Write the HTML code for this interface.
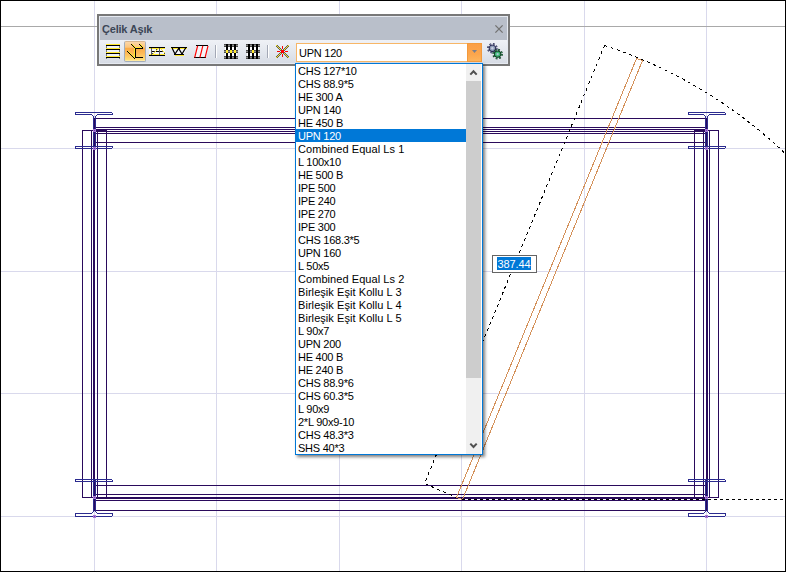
<!DOCTYPE html>
<html><head><meta charset="utf-8"><title>Çelik Aşık</title>
<style>
html,body{margin:0;padding:0;background:#fff;}
body{width:786px;height:572px;position:relative;overflow:hidden;font-family:"Liberation Sans",sans-serif;font-size:11px;color:#000;}
#cv{position:absolute;left:0;top:0;}
#frame{position:absolute;left:0;top:0;width:784px;height:570px;border:1px solid #000;pointer-events:none;}
#tb{position:absolute;left:97px;top:14px;width:409px;height:48px;border:2px solid #787878;background:#b9bfca;}
#tb::after{content:'';position:absolute;left:0;top:0;width:409px;height:48px;box-shadow:inset 0 0 0 1px #e6eaf1;pointer-events:none;}
#title{position:absolute;left:3px;top:7px;font-weight:bold;font-size:11px;letter-spacing:-0.2px;color:#3c4656;line-height:13px;}
#bar{position:absolute;left:0;top:24px;width:409px;height:24px;background:linear-gradient(#eff1f6,#e3e7ee 50%,#d6dbe4);}
#close{position:absolute;left:395px;top:7.5px;width:10px;height:10px;}
#sel{position:absolute;left:25px;top:1px;width:20px;height:19px;border:1px solid #a3adba;border-top-color:#d8b690;border-radius:2px;background:linear-gradient(#fcd6a8 0,#fcc57c 28%,#fbaa46 32%,#fdba58 60%,#ffdf78 94%,#fff1c0 100%);}
#combo{position:absolute;left:197px;top:3px;width:184px;height:17px;border:1px solid #f7b667;background:#fff;}
#combo span{position:absolute;left:2px;top:3px;line-height:13px;letter-spacing:-0.25px;}
#cbtn{position:absolute;right:-1px;top:-1px;width:13px;height:17px;border:1px solid #f39a3c;background:linear-gradient(#fb9f47,#fca64d 60%,#fdb45c);}
#cbtn svg{position:absolute;left:4px;top:6px;}
#pop{position:absolute;left:295px;top:63px;width:186px;height:390px;border:1px solid #0078d7;background:#fff;box-shadow:2px 2px 3px rgba(0,0,0,.5);}
.r{height:13px;line-height:15px;padding-left:2px;width:168px;white-space:nowrap;overflow:hidden;}
.r{letter-spacing:0.06px;}
.r.u{letter-spacing:-0.25px;}
.r.sel{background:#0078d7;color:#fff;}
#sb{position:absolute;left:170px;top:0;width:15px;height:390px;background:#f0f0f0;}
#thumb{position:absolute;left:0;top:17px;width:15px;height:297px;background:#cdcdcd;}
#inp{position:absolute;left:492px;top:255px;width:43px;height:16px;border:1px solid #646464;background:#fff;}
#inp span{position:absolute;left:4px;top:1px;height:13px;width:33.5px;line-height:15px;background:#0078d7;color:#fff;padding:0 0 0 0.5px;overflow:hidden;letter-spacing:-0.1px;}
</style></head><body>
<svg id="cv" width="786" height="572" viewBox="0 0 786 572" shape-rendering="crispEdges">
<rect x="94" y="0" width="1" height="572" fill="#d9d9ec"/>
<rect x="216" y="0" width="1" height="572" fill="#d9d9ec"/>
<rect x="339" y="0" width="1" height="572" fill="#d9d9ec"/>
<rect x="461" y="0" width="1" height="572" fill="#d9d9ec"/>
<rect x="584" y="0" width="1" height="572" fill="#d9d9ec"/>
<rect x="706" y="0" width="1" height="572" fill="#d9d9ec"/>
<rect x="0" y="148" width="786" height="1" fill="#d9d9ec"/>
<rect x="0" y="271" width="786" height="1" fill="#d9d9ec"/>
<rect x="0" y="393" width="786" height="1" fill="#d9d9ec"/>
<rect x="0" y="516" width="786" height="1" fill="#d9d9ec"/>
<rect x="0" y="26" width="786" height="1" fill="#a9a9a9"/>
<rect x="96" y="118" width="610" height="1" fill="#2a0a5c"/>
<rect x="96" y="127" width="610" height="1" fill="#2a0a5c"/>
<rect x="96" y="129" width="610" height="1" fill="#2a0a5c"/>
<rect x="96" y="131" width="610" height="1" fill="#2a0a5c"/>
<rect x="96" y="133" width="610" height="1" fill="#2a0a5c"/>
<rect x="96" y="142" width="610" height="1" fill="#2a0a5c"/>
<rect x="96" y="485" width="610" height="1" fill="#2a0a5c"/>
<rect x="96" y="494" width="610" height="1" fill="#2a0a5c"/>
<rect x="96" y="497" width="610" height="2" fill="#2a0a5c"/>
<rect x="96" y="500" width="610" height="1" fill="#2a0a5c"/>
<rect x="96" y="510" width="610" height="1" fill="#2a0a5c"/>
<rect x="82" y="130" width="1" height="368" fill="#2a0a5c"/>
<rect x="91" y="130" width="1" height="368" fill="#2a0a5c"/>
<rect x="97" y="130" width="1" height="368" fill="#2a0a5c"/>
<rect x="106" y="130" width="1" height="368" fill="#2a0a5c"/>
<rect x="694" y="130" width="1" height="368" fill="#2a0a5c"/>
<rect x="703" y="130" width="1" height="368" fill="#2a0a5c"/>
<rect x="709" y="130" width="1" height="368" fill="#2a0a5c"/>
<rect x="718" y="130" width="1" height="368" fill="#2a0a5c"/>
<rect x="93" y="118" width="2" height="393" fill="#2a0a5c"/>
<rect x="706" y="118" width="2" height="393" fill="#2a0a5c"/>
<rect x="82" y="130" width="25" height="1" fill="#2a0a5c"/>
<rect x="694" y="130" width="25" height="1" fill="#2a0a5c"/>
<rect x="82" y="497" width="25" height="1" fill="#2a0a5c"/>
<rect x="694" y="497" width="25" height="1" fill="#2a0a5c"/>
<rect x="96" y="129" width="11" height="3" fill="#2a0a5c"/>
<rect x="694" y="129" width="11" height="3" fill="#2a0a5c"/>
<rect x="76" y="112" width="36" height="1" fill="#2b2b8f"/>
<rect x="75" y="112" width="1" height="3" fill="#2b2b8f"/>
<rect x="112" y="113" width="1" height="2" fill="#2b2b8f"/>
<rect x="76" y="114" width="16" height="1" fill="#2b2b8f"/>
<rect x="97" y="114" width="15" height="1" fill="#2b2b8f"/>
<rect x="92" y="115" width="1" height="1" fill="#2b2b8f"/>
<rect x="96" y="115" width="1" height="1" fill="#2b2b8f"/>
<rect x="76" y="148" width="36" height="1" fill="#2b2b8f"/>
<rect x="75" y="146" width="1" height="3" fill="#2b2b8f"/>
<rect x="112" y="146" width="1" height="2" fill="#2b2b8f"/>
<rect x="76" y="146" width="36" height="1" fill="#2b2b8f"/>
<rect x="93" y="116" width="1" height="33" fill="#2b2b8f"/>
<rect x="95" y="116" width="1" height="33" fill="#2b2b8f"/>
<rect x="689" y="112" width="36" height="1" fill="#2b2b8f"/>
<rect x="688" y="112" width="1" height="3" fill="#2b2b8f"/>
<rect x="725" y="113" width="1" height="2" fill="#2b2b8f"/>
<rect x="689" y="114" width="15" height="1" fill="#2b2b8f"/>
<rect x="709" y="114" width="16" height="1" fill="#2b2b8f"/>
<rect x="704" y="115" width="1" height="1" fill="#2b2b8f"/>
<rect x="708" y="115" width="1" height="1" fill="#2b2b8f"/>
<rect x="689" y="148" width="36" height="1" fill="#2b2b8f"/>
<rect x="688" y="146" width="1" height="3" fill="#2b2b8f"/>
<rect x="725" y="146" width="1" height="2" fill="#2b2b8f"/>
<rect x="689" y="146" width="36" height="1" fill="#2b2b8f"/>
<rect x="705" y="116" width="1" height="33" fill="#2b2b8f"/>
<rect x="707" y="116" width="1" height="33" fill="#2b2b8f"/>
<rect x="76" y="479" width="36" height="1" fill="#2b2b8f"/>
<rect x="75" y="479" width="1" height="3" fill="#2b2b8f"/>
<rect x="112" y="480" width="1" height="2" fill="#2b2b8f"/>
<rect x="76" y="481" width="36" height="1" fill="#2b2b8f"/>
<rect x="76" y="516" width="36" height="1" fill="#2b2b8f"/>
<rect x="75" y="513" width="1" height="4" fill="#2b2b8f"/>
<rect x="112" y="513" width="1" height="3" fill="#2b2b8f"/>
<rect x="76" y="513" width="16" height="1" fill="#2b2b8f"/>
<rect x="97" y="513" width="15" height="1" fill="#2b2b8f"/>
<rect x="92" y="512" width="1" height="1" fill="#2b2b8f"/>
<rect x="96" y="512" width="1" height="1" fill="#2b2b8f"/>
<rect x="93" y="479" width="1" height="33" fill="#2b2b8f"/>
<rect x="95" y="479" width="1" height="33" fill="#2b2b8f"/>
<rect x="689" y="479" width="36" height="1" fill="#2b2b8f"/>
<rect x="688" y="479" width="1" height="3" fill="#2b2b8f"/>
<rect x="725" y="480" width="1" height="2" fill="#2b2b8f"/>
<rect x="689" y="481" width="36" height="1" fill="#2b2b8f"/>
<rect x="689" y="516" width="36" height="1" fill="#2b2b8f"/>
<rect x="688" y="513" width="1" height="4" fill="#2b2b8f"/>
<rect x="725" y="513" width="1" height="3" fill="#2b2b8f"/>
<rect x="689" y="513" width="15" height="1" fill="#2b2b8f"/>
<rect x="709" y="513" width="16" height="1" fill="#2b2b8f"/>
<rect x="704" y="512" width="1" height="1" fill="#2b2b8f"/>
<rect x="708" y="512" width="1" height="1" fill="#2b2b8f"/>
<rect x="705" y="479" width="1" height="33" fill="#2b2b8f"/>
<rect x="707" y="479" width="1" height="33" fill="#2b2b8f"/>
<rect x="93" y="129" width="3" height="3" fill="#a877d6"/>
<rect x="94" y="130" width="1" height="1" fill="#6a3fae"/>
<rect x="93" y="147" width="3" height="3" fill="#a877d6"/>
<rect x="94" y="148" width="1" height="1" fill="#6a3fae"/>
<rect x="93" y="496" width="3" height="3" fill="#a877d6"/>
<rect x="94" y="497" width="1" height="1" fill="#6a3fae"/>
<rect x="93" y="515" width="3" height="3" fill="#a877d6"/>
<rect x="94" y="516" width="1" height="1" fill="#6a3fae"/>
<rect x="705" y="129" width="3" height="3" fill="#a877d6"/>
<rect x="706" y="130" width="1" height="1" fill="#6a3fae"/>
<rect x="705" y="147" width="3" height="3" fill="#a877d6"/>
<rect x="706" y="148" width="1" height="1" fill="#6a3fae"/>
<rect x="705" y="496" width="3" height="3" fill="#a877d6"/>
<rect x="706" y="497" width="1" height="1" fill="#6a3fae"/>
<rect x="705" y="515" width="3" height="3" fill="#a877d6"/>
<rect x="706" y="516" width="1" height="1" fill="#6a3fae"/>
<g stroke="#d4915a" stroke-width="1" fill="none"><path d="M456.5 497.5 L636.5 58.5 L642.5 60.5 L462.5 499.5 Z"/></g>
<g stroke="#000" stroke-width="1" fill="none" stroke-dasharray="3 3.5"><path d="M604.5 45.5 L424.5 483.5 L456.5 497.5"/><path d="M462 499.5 H786" stroke-dasharray="3 3"/><path d="M604.5 45.5 A476.2 476.2 0 0 1 786 154.2"/></g>
</svg>
<div id="tb">
 <div id="title">Çelik Aşık</div>
 <svg id="close" viewBox="0 0 10 10"><path d="M1.4 1.4L8.6 8.6M8.6 1.4L1.4 8.6" stroke="#727272" stroke-width="1.3" fill="none"/></svg>
 <div id="bar">
  <div id="sel"></div>
  <svg id="icons" width="409" height="24" viewBox="0 0 409 24" style="position:absolute;left:0;top:0" shape-rendering="crispEdges">
<g transform="translate(-99,-40)"><rect x="106" y="45" width="14" height="12" fill="#eef1f9"/><rect x="106" y="44" width="1" height="15" fill="#7a7a7a"/><rect x="119" y="44" width="1" height="15" fill="#7a7a7a"/><rect x="106" y="44" width="14" height="1" fill="#ffe92e"/><rect x="106" y="45" width="14" height="1" fill="#000"/><rect x="106" y="48" width="14" height="1" fill="#ffe92e"/><rect x="106" y="49" width="14" height="1" fill="#000"/><rect x="106" y="52" width="14" height="1" fill="#ffe92e"/><rect x="106" y="53" width="14" height="1" fill="#000"/><rect x="106" y="56" width="14" height="1" fill="#ffe92e"/><rect x="106" y="57" width="14" height="1" fill="#000"/><rect x="131" y="44" width="1" height="1" fill="#000"/><rect x="132" y="44" width="1" height="1" fill="#ffe92e"/><rect x="132" y="45" width="1" height="1" fill="#000"/><rect x="133" y="45" width="1" height="1" fill="#ffe92e"/><rect x="133" y="46" width="1" height="1" fill="#000"/><rect x="134" y="46" width="1" height="1" fill="#ffe92e"/><rect x="134" y="47" width="1" height="1" fill="#000"/><rect x="135" y="47" width="1" height="1" fill="#ffe92e"/><rect x="127" y="51" width="1" height="1" fill="#000"/><rect x="128" y="51" width="1" height="1" fill="#ffe92e"/><rect x="128" y="52" width="1" height="1" fill="#000"/><rect x="129" y="52" width="1" height="1" fill="#ffe92e"/><rect x="129" y="53" width="1" height="1" fill="#000"/><rect x="130" y="53" width="1" height="1" fill="#ffe92e"/><rect x="130" y="54" width="1" height="1" fill="#000"/><rect x="131" y="54" width="1" height="1" fill="#ffe92e"/><rect x="131" y="55" width="1" height="1" fill="#000"/><rect x="132" y="55" width="1" height="1" fill="#ffe92e"/><rect x="132" y="56" width="1" height="1" fill="#000"/><rect x="133" y="56" width="1" height="1" fill="#ffe92e"/><rect x="133" y="57" width="1" height="1" fill="#000"/><rect x="134" y="57" width="1" height="1" fill="#ffe92e"/><rect x="134" y="58" width="1" height="1" fill="#000"/><rect x="134" y="48" width="1" height="9" fill="#ffe92e"/><rect x="135" y="48" width="1" height="10" fill="#000"/><rect x="136" y="47" width="6" height="1" fill="#ffe92e"/><rect x="135" y="48" width="8" height="1" fill="#000"/><rect x="139" y="44" width="1" height="1" fill="#000"/><rect x="140" y="44" width="1" height="1" fill="#ffe92e"/><rect x="140" y="45" width="1" height="1" fill="#000"/><rect x="141" y="45" width="1" height="1" fill="#ffe92e"/><rect x="141" y="46" width="1" height="1" fill="#000"/><rect x="142" y="46" width="1" height="1" fill="#ffe92e"/><rect x="142" y="47" width="1" height="1" fill="#000"/><rect x="135" y="57" width="8" height="1" fill="#000"/><rect x="149" y="49" width="16" height="5" fill="#f2f4fb"/><rect x="149" y="47" width="16" height="1" fill="#000"/><rect x="149" y="48" width="16" height="1" fill="#ffe92e"/><rect x="149" y="54" width="16" height="1" fill="#ffe92e"/><rect x="149" y="55" width="16" height="1" fill="#000"/><rect x="152" y="51" width="12" height="1" fill="#000"/><rect x="151" y="48" width="1" height="7" fill="#5c5c5c"/><rect x="159" y="48" width="1" height="7" fill="#5c5c5c"/><rect x="153" y="53" width="1" height="1" fill="#ffe92e"/><rect x="152" y="53" width="1" height="1" fill="#444"/><rect x="154" y="52" width="1" height="1" fill="#ffe92e"/><rect x="155" y="51" width="1" height="1" fill="#ffe92e"/><rect x="154" y="51" width="1" height="1" fill="#444"/><rect x="156" y="50" width="1" height="1" fill="#ffe92e"/><rect x="157" y="49" width="1" height="1" fill="#ffe92e"/><rect x="156" y="49" width="1" height="1" fill="#444"/><rect x="158" y="48" width="1" height="1" fill="#ffe92e"/><rect x="152" y="54" width="3" height="1" fill="#ffe92e"/><rect x="161" y="49" width="1" height="1" fill="#ffe92e"/><rect x="162" y="50" width="1" height="1" fill="#ffe92e"/><rect x="162" y="51" width="1" height="1" fill="#444"/><rect x="163" y="51" width="1" height="1" fill="#ffe92e"/><rect x="164" y="52" width="1" height="1" fill="#ffe92e"/><rect x="164" y="53" width="1" height="1" fill="#444"/><rect x="160" y="48" width="3" height="1" fill="#ffe92e"/><path d="M171 48H186.5L184 54.5H174Z" fill="#f4f6fb"/><rect x="171" y="47" width="16" height="1" fill="#000"/><rect x="171" y="48" width="16" height="1" fill="#ffe92e"/><rect x="172" y="48" width="1" height="1" fill="#000"/><rect x="178" y="48" width="2" height="1" fill="#000"/><rect x="185" y="48" width="1" height="1" fill="#000"/><rect x="174" y="54" width="10" height="1" fill="#000"/><rect x="175" y="55" width="9" height="1" fill="#ffe92e"/><path d="M172.3 48.5L175 54L178.7 48.5L182 54L185.3 48.5" stroke="#000" stroke-width="1.25" fill="none" shape-rendering="auto"/><path d="M197 46H208L205 57H194Z" fill="#f4f4f8"/><rect x="196" y="45" width="12" height="1" fill="#000"/><rect x="194" y="57" width="12" height="1" fill="#000"/><path d="M194.7 57.5L197.6 45.8" stroke="#ff0000" stroke-width="1.15" shape-rendering="auto"/><path d="M199.9 57.5L202.8 45.8" stroke="#ff0000" stroke-width="1.15" shape-rendering="auto"/><path d="M205.1 57.5L208.0 45.8" stroke="#ff0000" stroke-width="1.15" shape-rendering="auto"/><rect x="215" y="45" width="1" height="13" fill="#a3a8b5"/><rect x="216" y="45" width="1" height="13" fill="#fff"/><rect x="267" y="45" width="1" height="13" fill="#a3a8b5"/><rect x="268" y="45" width="1" height="13" fill="#fff"/><rect x="225" y="47" width="12" height="9" fill="#fff"/><rect x="224" y="44" width="14" height="3" fill="#4a4a4a"/><rect x="224" y="45" width="1" height="1" fill="#9a9a9a"/><rect x="229" y="45" width="1" height="1" fill="#9a9a9a"/><rect x="233" y="45" width="1" height="1" fill="#9a9a9a"/><rect x="237" y="45" width="1" height="1" fill="#9a9a9a"/><rect x="224" y="50" width="14" height="3" fill="#4a4a4a"/><rect x="224" y="51" width="1" height="1" fill="#9a9a9a"/><rect x="229" y="51" width="1" height="1" fill="#9a9a9a"/><rect x="233" y="51" width="1" height="1" fill="#9a9a9a"/><rect x="237" y="51" width="1" height="1" fill="#9a9a9a"/><rect x="224" y="56" width="14" height="3" fill="#4a4a4a"/><rect x="224" y="57" width="1" height="1" fill="#9a9a9a"/><rect x="229" y="57" width="1" height="1" fill="#9a9a9a"/><rect x="233" y="57" width="1" height="1" fill="#9a9a9a"/><rect x="237" y="57" width="1" height="1" fill="#9a9a9a"/><rect x="226" y="44" width="2" height="15" fill="#000"/><rect x="226" y="50" width="2" height="3" fill="#ffe92e"/><rect x="230" y="44" width="2" height="15" fill="#000"/><rect x="230" y="50" width="2" height="3" fill="#ffe92e"/><rect x="234" y="44" width="2" height="15" fill="#000"/><rect x="234" y="50" width="2" height="3" fill="#ffe92e"/><rect x="224" y="45" width="2" height="1" fill="#8c8c8c"/><rect x="228" y="45" width="2" height="1" fill="#8c8c8c"/><rect x="232" y="45" width="2" height="1" fill="#8c8c8c"/><rect x="236" y="45" width="2" height="1" fill="#8c8c8c"/><rect x="224" y="51" width="2" height="1" fill="#8c8c8c"/><rect x="228" y="51" width="2" height="1" fill="#8c8c8c"/><rect x="232" y="51" width="2" height="1" fill="#8c8c8c"/><rect x="236" y="51" width="2" height="1" fill="#8c8c8c"/><rect x="224" y="57" width="2" height="1" fill="#8c8c8c"/><rect x="228" y="57" width="2" height="1" fill="#8c8c8c"/><rect x="232" y="57" width="2" height="1" fill="#8c8c8c"/><rect x="236" y="57" width="2" height="1" fill="#8c8c8c"/><rect x="247" y="47" width="12" height="9" fill="#fff"/><rect x="246" y="44" width="14" height="3" fill="#4a4a4a"/><rect x="246" y="45" width="1" height="1" fill="#9a9a9a"/><rect x="251" y="45" width="1" height="1" fill="#9a9a9a"/><rect x="255" y="45" width="1" height="1" fill="#9a9a9a"/><rect x="259" y="45" width="1" height="1" fill="#9a9a9a"/><rect x="246" y="50" width="14" height="3" fill="#4a4a4a"/><rect x="246" y="51" width="1" height="1" fill="#9a9a9a"/><rect x="251" y="51" width="1" height="1" fill="#9a9a9a"/><rect x="255" y="51" width="1" height="1" fill="#9a9a9a"/><rect x="259" y="51" width="1" height="1" fill="#9a9a9a"/><rect x="246" y="56" width="14" height="3" fill="#4a4a4a"/><rect x="246" y="57" width="1" height="1" fill="#9a9a9a"/><rect x="251" y="57" width="1" height="1" fill="#9a9a9a"/><rect x="255" y="57" width="1" height="1" fill="#9a9a9a"/><rect x="259" y="57" width="1" height="1" fill="#9a9a9a"/><rect x="248" y="44" width="2" height="15" fill="#000"/><rect x="252" y="44" width="2" height="15" fill="#000"/><rect x="252" y="50" width="2" height="3" fill="#ffe92e"/><rect x="256" y="44" width="2" height="15" fill="#000"/><rect x="246" y="45" width="2" height="1" fill="#8c8c8c"/><rect x="250" y="45" width="2" height="1" fill="#8c8c8c"/><rect x="254" y="45" width="2" height="1" fill="#8c8c8c"/><rect x="258" y="45" width="2" height="1" fill="#8c8c8c"/><rect x="246" y="51" width="2" height="1" fill="#8c8c8c"/><rect x="250" y="51" width="2" height="1" fill="#8c8c8c"/><rect x="254" y="51" width="2" height="1" fill="#8c8c8c"/><rect x="258" y="51" width="2" height="1" fill="#8c8c8c"/><rect x="246" y="57" width="2" height="1" fill="#8c8c8c"/><rect x="250" y="57" width="2" height="1" fill="#8c8c8c"/><rect x="254" y="57" width="2" height="1" fill="#8c8c8c"/><rect x="258" y="57" width="2" height="1" fill="#8c8c8c"/><rect x="277" y="45" width="1" height="1" fill="#5a5a5a"/><rect x="276" y="46" width="1" height="1" fill="#5a5a5a"/><rect x="277" y="57" width="1" height="1" fill="#5a5a5a"/><rect x="276" y="56" width="1" height="1" fill="#5a5a5a"/><rect x="278" y="46" width="1" height="1" fill="#5a5a5a"/><rect x="277" y="47" width="1" height="1" fill="#5a5a5a"/><rect x="278" y="56" width="1" height="1" fill="#5a5a5a"/><rect x="277" y="55" width="1" height="1" fill="#5a5a5a"/><rect x="279" y="47" width="1" height="1" fill="#5a5a5a"/><rect x="278" y="48" width="1" height="1" fill="#5a5a5a"/><rect x="279" y="55" width="1" height="1" fill="#5a5a5a"/><rect x="278" y="54" width="1" height="1" fill="#5a5a5a"/><rect x="280" y="48" width="1" height="1" fill="#5a5a5a"/><rect x="279" y="49" width="1" height="1" fill="#5a5a5a"/><rect x="280" y="54" width="1" height="1" fill="#5a5a5a"/><rect x="279" y="53" width="1" height="1" fill="#5a5a5a"/><rect x="281" y="49" width="1" height="1" fill="#5a5a5a"/><rect x="280" y="50" width="1" height="1" fill="#5a5a5a"/><rect x="281" y="53" width="1" height="1" fill="#5a5a5a"/><rect x="280" y="52" width="1" height="1" fill="#5a5a5a"/><rect x="282" y="50" width="1" height="1" fill="#5a5a5a"/><rect x="281" y="51" width="1" height="1" fill="#5a5a5a"/><rect x="282" y="52" width="1" height="1" fill="#5a5a5a"/><rect x="281" y="51" width="1" height="1" fill="#5a5a5a"/><rect x="283" y="51" width="1" height="1" fill="#5a5a5a"/><rect x="282" y="52" width="1" height="1" fill="#5a5a5a"/><rect x="283" y="51" width="1" height="1" fill="#5a5a5a"/><rect x="282" y="50" width="1" height="1" fill="#5a5a5a"/><rect x="284" y="52" width="1" height="1" fill="#5a5a5a"/><rect x="283" y="53" width="1" height="1" fill="#5a5a5a"/><rect x="284" y="50" width="1" height="1" fill="#5a5a5a"/><rect x="283" y="49" width="1" height="1" fill="#5a5a5a"/><rect x="285" y="53" width="1" height="1" fill="#5a5a5a"/><rect x="284" y="54" width="1" height="1" fill="#5a5a5a"/><rect x="285" y="49" width="1" height="1" fill="#5a5a5a"/><rect x="284" y="48" width="1" height="1" fill="#5a5a5a"/><rect x="286" y="54" width="1" height="1" fill="#5a5a5a"/><rect x="285" y="55" width="1" height="1" fill="#5a5a5a"/><rect x="286" y="48" width="1" height="1" fill="#5a5a5a"/><rect x="285" y="47" width="1" height="1" fill="#5a5a5a"/><rect x="287" y="55" width="1" height="1" fill="#5a5a5a"/><rect x="286" y="56" width="1" height="1" fill="#5a5a5a"/><rect x="287" y="47" width="1" height="1" fill="#5a5a5a"/><rect x="286" y="46" width="1" height="1" fill="#5a5a5a"/><rect x="288" y="56" width="1" height="1" fill="#5a5a5a"/><rect x="287" y="57" width="1" height="1" fill="#5a5a5a"/><rect x="288" y="46" width="1" height="1" fill="#5a5a5a"/><rect x="287" y="45" width="1" height="1" fill="#5a5a5a"/><rect x="276" y="45" width="1" height="1" fill="#ffe92e"/><rect x="276" y="57" width="1" height="1" fill="#ffe92e"/><rect x="277" y="46" width="1" height="1" fill="#ffe92e"/><rect x="277" y="56" width="1" height="1" fill="#ffe92e"/><rect x="278" y="47" width="1" height="1" fill="#ffe92e"/><rect x="278" y="55" width="1" height="1" fill="#ffe92e"/><rect x="279" y="48" width="1" height="1" fill="#ffe92e"/><rect x="279" y="54" width="1" height="1" fill="#ffe92e"/><rect x="280" y="49" width="1" height="1" fill="#ffe92e"/><rect x="280" y="53" width="1" height="1" fill="#ffe92e"/><rect x="281" y="50" width="1" height="1" fill="#ffe92e"/><rect x="281" y="52" width="1" height="1" fill="#ffe92e"/><rect x="282" y="51" width="1" height="1" fill="#ffe92e"/><rect x="282" y="51" width="1" height="1" fill="#ffe92e"/><rect x="283" y="52" width="1" height="1" fill="#ffe92e"/><rect x="283" y="50" width="1" height="1" fill="#ffe92e"/><rect x="284" y="53" width="1" height="1" fill="#ffe92e"/><rect x="284" y="49" width="1" height="1" fill="#ffe92e"/><rect x="285" y="54" width="1" height="1" fill="#ffe92e"/><rect x="285" y="48" width="1" height="1" fill="#ffe92e"/><rect x="286" y="55" width="1" height="1" fill="#ffe92e"/><rect x="286" y="47" width="1" height="1" fill="#ffe92e"/><rect x="287" y="56" width="1" height="1" fill="#ffe92e"/><rect x="287" y="46" width="1" height="1" fill="#ffe92e"/><rect x="288" y="57" width="1" height="1" fill="#ffe92e"/><rect x="288" y="45" width="1" height="1" fill="#ffe92e"/><rect x="277" y="51" width="3" height="1" fill="#ff0000"/><rect x="285" y="51" width="3" height="1" fill="#ff0000"/><rect x="282" y="46" width="1" height="3" fill="#ff0000"/><rect x="282" y="54" width="1" height="3" fill="#ff0000"/><rect x="281" y="50" width="3" height="3" fill="#ff0000"/><g shape-rendering="auto"><circle cx="492.4" cy="48.3" r="4.2" fill="none" stroke="#24244e" stroke-width="2.2" stroke-dasharray="1.649 1.649"/><circle cx="492.4" cy="48.3" r="3.6" fill="#24244e"/><circle cx="492.4" cy="48.3" r="2.7" fill="#8f9cb8"/><circle cx="492.4" cy="48.3" r="4.2" fill="none" stroke="#8f9cb8" stroke-width="1" stroke-dasharray="0.825 2.474" stroke-dashoffset="-0.412"/><circle cx="492.4" cy="48.3" r="1.2" fill="#c8d0e0"/></g><g shape-rendering="auto"><circle cx="497.6" cy="54.1" r="4.2" fill="none" stroke="#123a22" stroke-width="2.2" stroke-dasharray="1.649 1.649"/><circle cx="497.6" cy="54.1" r="3.6" fill="#123a22"/><circle cx="497.6" cy="54.1" r="2.7" fill="#3fb874"/><circle cx="497.6" cy="54.1" r="4.2" fill="none" stroke="#3fb874" stroke-width="1" stroke-dasharray="0.825 2.474" stroke-dashoffset="-0.412"/><circle cx="497.6" cy="54.1" r="1.2" fill="#a8c8d8"/></g></g>
  </svg>
  <div id="combo"><span>UPN 120</span><div id="cbtn"><svg width="5" height="3" viewBox="0 0 5 3"><path d="M0 0H5L2.5 3Z" fill="#7b7f8c"/></svg></div></div>
 </div>
</div>
<div id="pop">
<div class="r u">CHS 127*10</div>
<div class="r u">CHS 88.9*5</div>
<div class="r u">HE 300 A</div>
<div class="r u">UPN 140</div>
<div class="r u">HE 450 B</div>
<div class="r sel u">UPN 120</div>
<div class="r">Combined Equal Ls 1</div>
<div class="r u">L 100x10</div>
<div class="r u">HE 500 B</div>
<div class="r u">IPE 500</div>
<div class="r u">IPE 240</div>
<div class="r u">IPE 270</div>
<div class="r u">IPE 300</div>
<div class="r u">CHS 168.3*5</div>
<div class="r u">UPN 160</div>
<div class="r u">L 50x5</div>
<div class="r">Combined Equal Ls 2</div>
<div class="r">Birleşik Eşit Kollu L 3</div>
<div class="r">Birleşik Eşit Kollu L 4</div>
<div class="r">Birleşik Eşit Kollu L 5</div>
<div class="r u">L 90x7</div>
<div class="r u">UPN 200</div>
<div class="r u">HE 400 B</div>
<div class="r u">HE 240 B</div>
<div class="r u">CHS 88.9*6</div>
<div class="r u">CHS 60.3*5</div>
<div class="r u">L 90x9</div>
<div class="r u">2*L 90x9-10</div>
<div class="r u">CHS 48.3*3</div>
<div class="r u">SHS 40*3</div>
<div id="sb"><div id="thumb"></div>
<svg width="16" height="390" viewBox="0 0 16 390" style="position:absolute;left:0;top:0"><path d="M4.3 10.6L7.5 7.2L10.7 10.6" stroke="#505050" stroke-width="2" fill="none"/><path d="M4.3 379.6L7.5 383L10.7 379.6" stroke="#505050" stroke-width="2" fill="none"/></svg>
</div>
</div>
<div id="inp"><span>387.44</span></div>
<div id="frame"></div>
</body></html>
